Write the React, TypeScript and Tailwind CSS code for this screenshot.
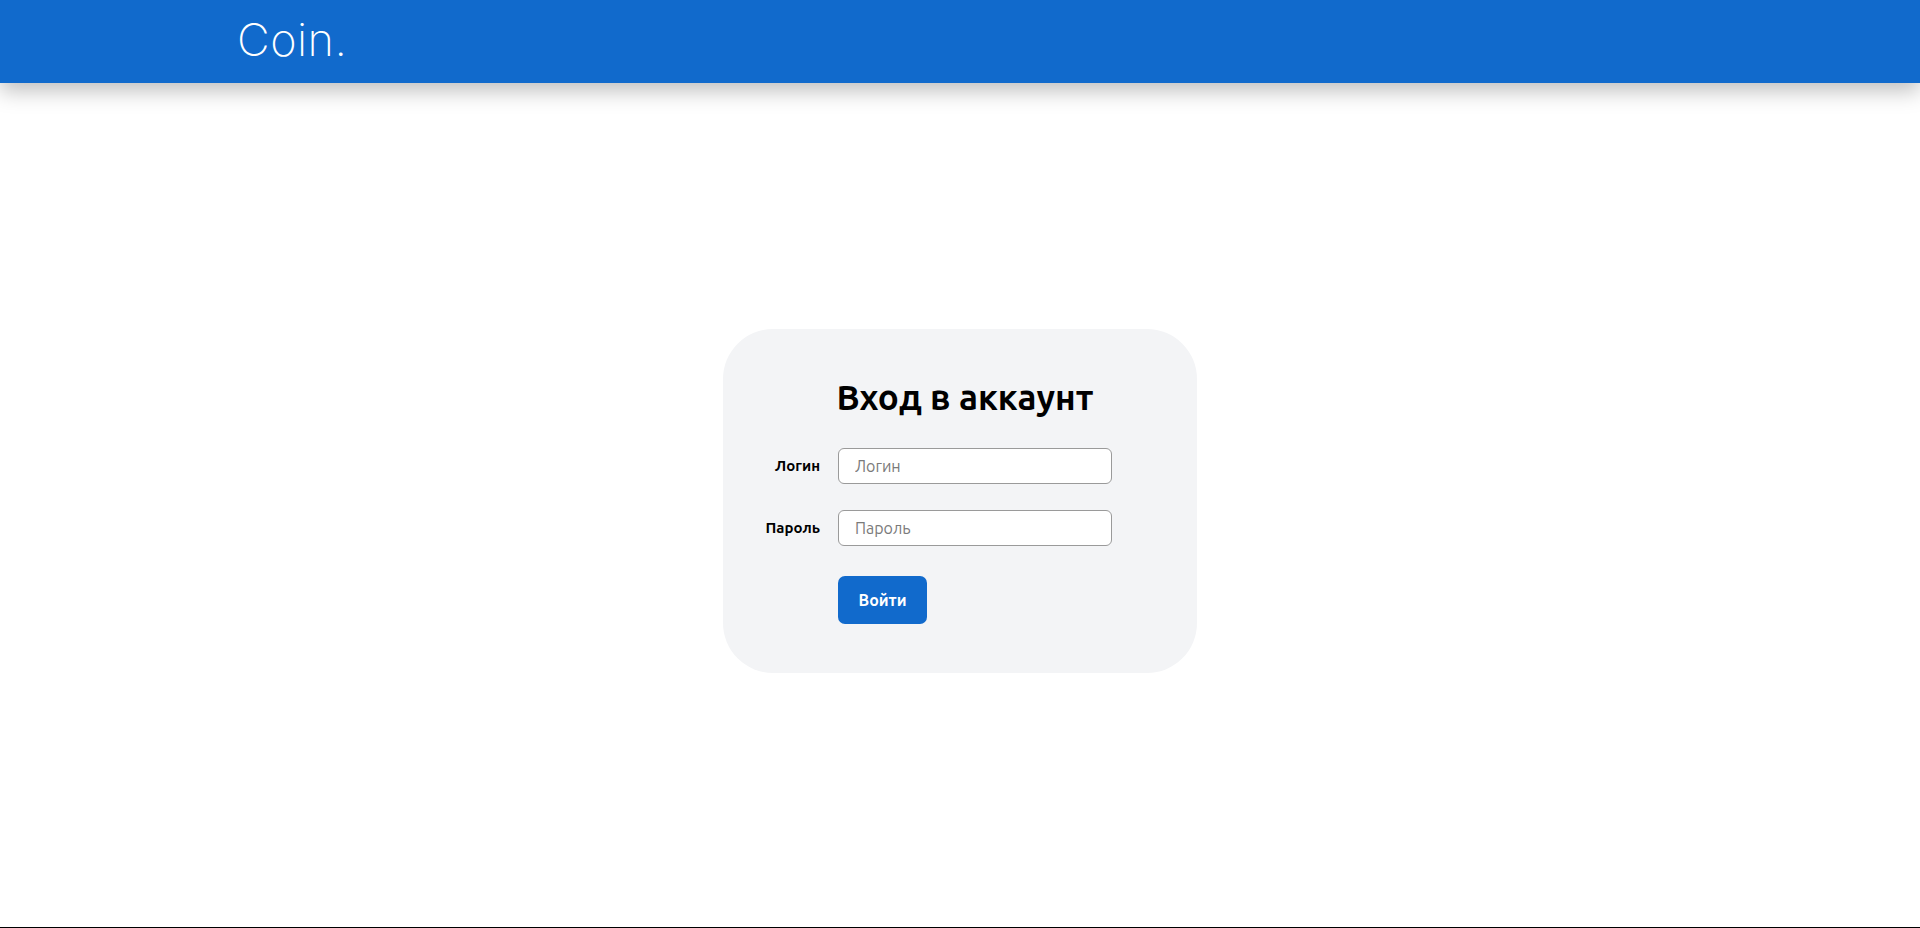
export default function App() {
  return (
    <div className="flex flex-col h-[928px] bg-white border-b border-black" style={{ fontFamily: 'Ubuntu, "Open Sans", "Noto Sans", sans-serif' }}>
      <header className="relative z-10 h-[83px] shrink-0 bg-[#116acc] shadow-[0_8px_20px_rgba(0,0,0,0.25)] flex items-center">
        <span className="ml-[237px] -mt-[4px] text-[45px] leading-none font-extralight text-white tracking-[0.5px]" style={{ fontFamily: 'Inter, "Open Sans", sans-serif' }}>
          Coin.
        </span>
      </header>
      <main className="flex-1 flex items-center justify-center pb-[8px]">
        <div className="w-[474px] h-[344px] rounded-[50px] bg-[#f3f4f6] pt-[44px] pl-[17px]">
          <h2 className="w-[450px] text-center text-[35px] leading-[48px] font-bold text-black">
            Вход в аккаунт
          </h2>
          <form className="mt-[27px] flex flex-col" onSubmit={(e) => e.preventDefault()}>
            <div className="flex items-center">
              <label className="w-[80px] mr-[18px] text-right text-[15px] font-bold text-black">Логин</label>
              <input
                type="text"
                placeholder="Логин"
                className="w-[274px] h-[36px] px-[16px] rounded-[6px] border border-[#9a9a9a] bg-white text-[16px] placeholder:text-[#7a7a7a] outline-none"
              />
            </div>
            <div className="flex items-center mt-[26px]">
              <label className="w-[80px] mr-[18px] text-right text-[15px] font-bold text-black">Пароль</label>
              <input
                type="password"
                placeholder="Пароль"
                className="w-[274px] h-[36px] px-[16px] rounded-[6px] border border-[#9a9a9a] bg-white text-[16px] placeholder:text-[#7a7a7a] outline-none"
              />
            </div>
            <div className="mt-[30px] ml-[98px]">
              <button type="submit" className="w-[89px] h-[48px] rounded-[7px] bg-[#116acc] text-white text-[16px] font-bold">
                Войти
              </button>
            </div>
          </form>
        </div>
      </main>
    </div>
  );
}
